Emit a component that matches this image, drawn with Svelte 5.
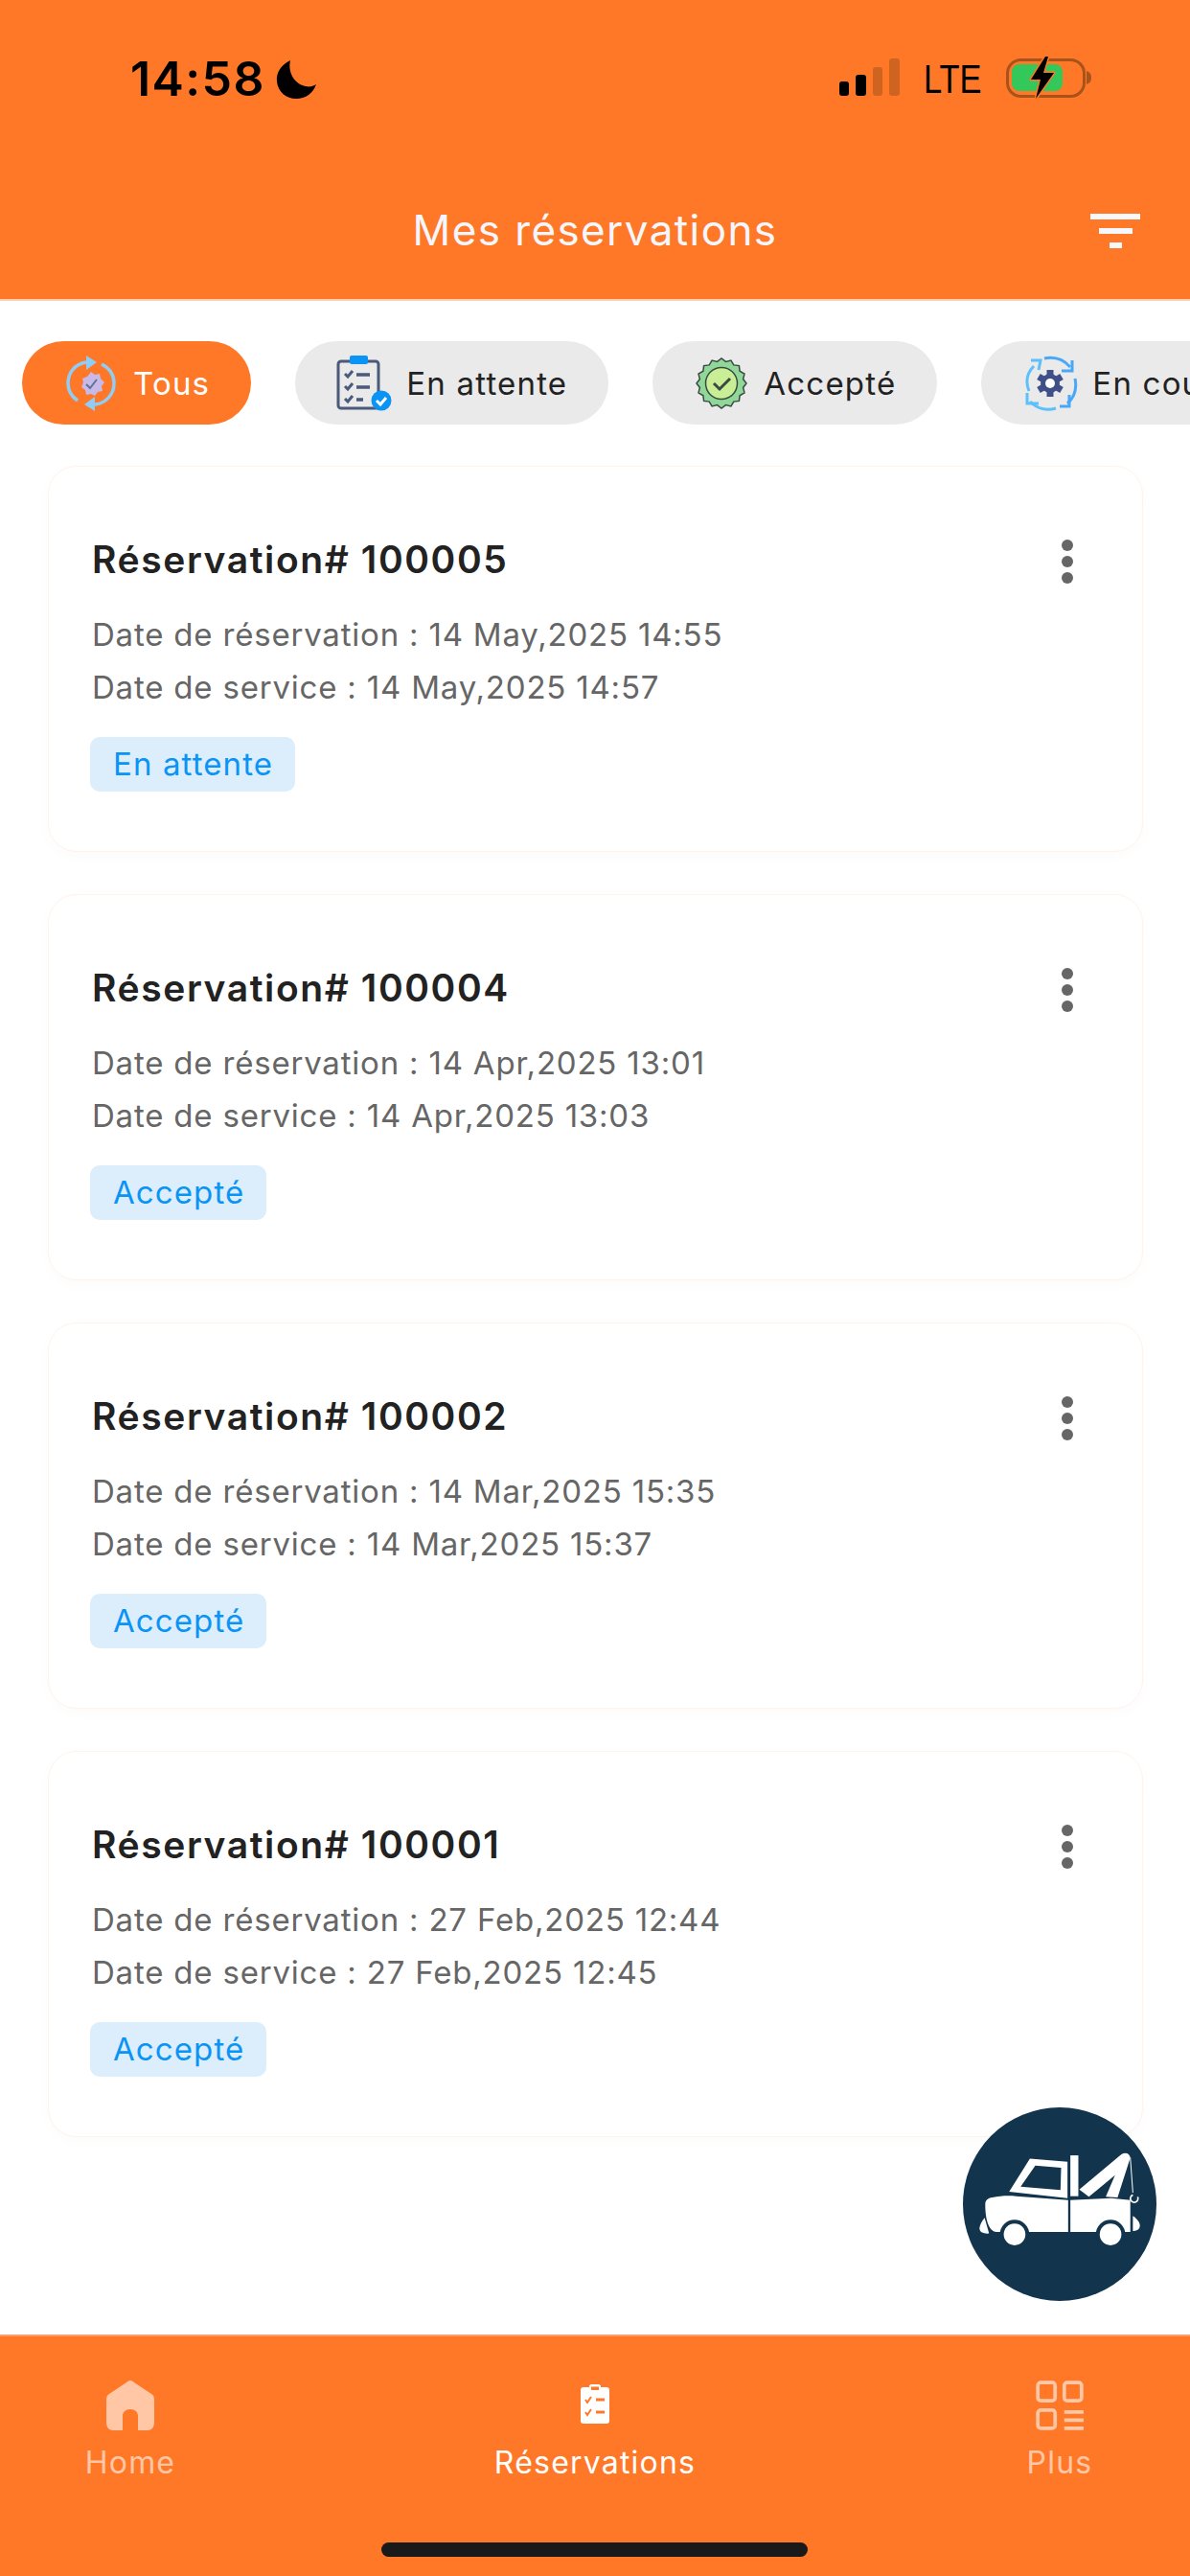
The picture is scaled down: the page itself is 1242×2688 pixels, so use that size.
<script>
  const chips = [
    { label: 'Tous', icon: 'all', active: true },
    { label: 'En attente', icon: 'pending' },
    { label: 'Accepté', icon: 'accepted' },
    { label: 'En cours', icon: 'progress' }
  ];

  const bookings = [
    { id: 100005, booked: '14 May,2025 14:55', service: '14 May,2025 14:57', status: 'En attente' },
    { id: 100004, booked: '14 Apr,2025 13:01', service: '14 Apr,2025 13:03', status: 'Accepté' },
    { id: 100002, booked: '14 Mar,2025 15:35', service: '14 Mar,2025 15:37', status: 'Accepté' },
    { id: 100001, booked: '27 Feb,2025 12:44', service: '27 Feb,2025 12:45', status: 'Accepté' }
  ];

  // scalloped edge for the "accepted" badge
  const scallop = Array.from({ length: 32 }, (_, i) => {
    const r = i % 2 ? 23 : 26;
    const a = (i / 32) * Math.PI * 2;
    return `${(29 + r * Math.cos(a)).toFixed(1)},${(29 + r * Math.sin(a)).toFixed(1)}`;
  }).join(' ');
</script>

<div class="screen">
  <header class="top">
    <div class="status">
      <span class="time">14:58</span>
      <svg class="moon" viewBox="0 0 42 40"><path d="M15 0C5 5 0 13 1 22c1 11 10 18 20 18 10 0 18-6 21-15-3 2-7 3-11 2C20 25 12 13 15 0z" fill="#000" /></svg>
      <span class="spacer"></span>
      <svg class="signal" viewBox="0 0 63 39">
        <rect x="0" y="24" width="10" height="15" rx="3" fill="#000" />
        <rect x="17" y="17" width="11" height="22" rx="3" fill="#000" />
        <rect x="35" y="9" width="10" height="30" rx="3" fill="#cf6420" />
        <rect x="52" y="0" width="11" height="39" rx="3" fill="#cf6420" />
      </svg>
      <span class="lte">LTE</span>
      <svg class="battery" viewBox="0 0 89 44">
        <rect x="1.5" y="3.5" width="80" height="38" rx="14" fill="none" stroke="#a9531c" stroke-width="3" />
        <rect x="6" y="8" width="53" height="28" rx="8" fill="#34c759" />
        <path d="M84 15c3 1 5 3 5 7s-2 6-5 7z" fill="#a9531c" />
        <path d="M41 0 26 24h10l-5 20 19-27H39l5-17z" fill="#000" stroke="#ff7828" stroke-width="3" paint-order="stroke" stroke-linejoin="round" />
      </svg>
    </div>
    <div class="titlebar">
      <h1>Mes réservations</h1>
      <div class="filter"><i></i><i></i><i></i></div>
    </div>
  </header>

  <div class="chips">
    {#each chips as chip}
      <div class="chip" class:active={chip.active}>
        <svg class="chip-icon" viewBox="0 0 58 58">
          {#if chip.icon === 'all'}
            <path d="M24 7C11 9 5 19 5 29c0 8 4 14 10 18" fill="none" stroke="#8fcdf6" stroke-width="3.5" />
            <path d="M24 0l11 7-11 8z" fill="#8fcdf6" />
            <path d="M40 9c8 4 13 11 13 20 0 12-9 21-20 22" fill="none" stroke="#8fcdf6" stroke-width="3.5" />
            <path d="M33 43l-11 8 11 7z" fill="#8fcdf6" />
            <path d="M29 17l4 3 5-1 1 5 4 4-3 4 1 5-5 1-3 4-4-2-5 1-1-5-4-3 2-5-1-4 5-2z" fill="#c7b9e8" />
            <path d="M24 30l4 4 7-9" fill="none" stroke="#5c7594" stroke-width="2" />
          {:else if chip.icon === 'pending'}
            <rect x="2" y="6" width="42" height="49" rx="3" fill="none" stroke="#4a5a7a" stroke-width="3" />
            <rect x="14" y="0" width="19" height="9" rx="2" fill="#0a94f5" />
            <path d="M9 19l3 3 5-6M9 32l3 3 5-6M9 45l3 3 5-6" fill="none" stroke="#4a5a7a" stroke-width="3" />
            <path d="M21 20h14M21 33h14M21 46h7" stroke="#4a5a7a" stroke-width="3.5" />
            <circle cx="47" cy="47" r="10.5" fill="#0a94f5" />
            <path d="M42 47l4 4 6-7" fill="none" stroke="#fff" stroke-width="3" />
          {:else if chip.icon === 'accepted'}
            <polygon points={scallop} fill="#8fd89a" stroke="#3b4a40" stroke-width="1.5" />
            <circle cx="29" cy="29" r="16.5" fill="#c9ee96" stroke="#3b4a40" stroke-width="1.5" />
            <path d="M21 29l6 6 11-11" fill="none" stroke="#3b4a40" stroke-width="3" />
          {:else}
            <path d="M7 37C3 27 5 18 12 11" fill="none" stroke="#5cc0fb" stroke-width="3" />
            <path d="M9 5h10l-2 10" fill="none" stroke="#5cc0fb" stroke-width="3" />
            <path d="M23 3c10-2 20 1 27 9" fill="none" stroke="#48a8f8" stroke-width="3" />
            <path d="M52 5v11H41" fill="none" stroke="#48a8f8" stroke-width="3" />
            <path d="M55 24c2 10 0 19-8 26" fill="none" stroke="#48a8f8" stroke-width="3" />
            <path d="M49 41v12H39" fill="none" stroke="#48a8f8" stroke-width="3" />
            <path d="M35 55c-10 3-20 0-27-7" fill="none" stroke="#5cc0fb" stroke-width="3" />
            <path d="M5 39v11h12" fill="none" stroke="#5cc0fb" stroke-width="3" />
            <path d="M29 29m-10 0a10 10 0 1 0 20 0a10 10 0 1 0-20 0" fill="#3f5088" />
            <path d="M29 15v28M17 22l24 14M17 36l24-14" stroke="#3f5088" stroke-width="7" />
            <circle cx="29" cy="29" r="5" fill="#fff" />
          {/if}
        </svg>
        <span>{chip.label}</span>
      </div>
    {/each}
  </div>

  <main class="list">
    {#each bookings as b}
      <article class="card">
        <div class="card-body">
          <h2>Réservation# {b.id}</h2>
          <p class="first">Date de réservation : {b.booked}</p>
          <p>Date de service : {b.service}</p>
          <span class="badge">{b.status}</span>
        </div>
        <div class="dots"><i></i><i></i><i></i></div>
      </article>
    {/each}
  </main>

  <nav class="tabs">
    <div class="tab">
      <svg class="tab-icon" viewBox="0 0 50 52"><path d="M25 0c2 0 3 1 4 2l18 12c2 1 3 3 3 6v24c0 5-3 8-7 8H33V37c0-4-3-7-8-7s-8 3-8 7v15H7c-4 0-7-3-7-8V20c0-3 1-5 3-6L21 2c1-1 2-2 4-2z" fill="#ffc7a6" /></svg>
      <span>Home</span>
    </div>
    <div class="tab current">
      <svg class="tab-icon clip" viewBox="0 0 30 41">
        <path d="M3 3h6V2c0-1 1-2 2-2h8c1 0 2 1 2 2v1h6c2 0 3 1 3 3v32c0 2-1 3-3 3H3c-2 0-3-1-3-3V6c0-2 1-3 3-3z" fill="#fff" />
        <rect x="11" y="2.5" width="8" height="3.5" fill="#ff7828" />
        <path d="M5 16l2 3 4-6M5 29l2 3 4-6" fill="none" stroke="#ff7828" stroke-width="2" />
        <path d="M16 16h9M16 29h9" stroke="#ff7828" stroke-width="3" />
      </svg>
      <span>Réservations</span>
    </div>
    <div class="tab">
      <svg class="tab-icon" viewBox="0 0 47 49" fill="none" stroke="#ffc7a6" stroke-width="3.5">
        <rect x="2" y="2" width="17" height="18" rx="3" />
        <rect x="28" y="2" width="17" height="18" rx="3" />
        <rect x="2" y="29" width="17" height="18" rx="3" />
        <path d="M28 31h19M28 39h19M28 47h19" />
      </svg>
      <span>Plus</span>
    </div>
    <div class="home-bar"></div>
  </nav>

  <div class="fab">
    <svg viewBox="135 88 607 606">
      <path d="M345 248l118 10v114l-183-20zM362 270l-46 66 125 11 2-70z" fill="#fff" fill-rule="evenodd" />
      <rect x="472" y="238" width="25" height="128" fill="#fff" />
      <path d="M500 345 632 235c12-8 26-4 28 10l-40 125-37-2 29-68-82 68z" fill="#fff" />
      <path d="M660 245l8 110" stroke="#fff" stroke-width="3" />
      <path d="M668 362a12 12 0 1 0 15 6" fill="none" stroke="#fff" stroke-width="5" />
      <path d="M205 392c0-14 8-20 22-22 24-5 50-6 75-4l163 12v100H240c-20 0-35-30-35-86z" fill="#fff" />
      <path d="M472 378l128-6 60 6v100H472z" fill="#fff" />
      <circle cx="297" cy="486" r="46" fill="#12344d" />
      <circle cx="598" cy="486" r="46" fill="#12344d" />
      <circle cx="297" cy="486" r="34" fill="#fff" />
      <circle cx="598" cy="486" r="34" fill="#fff" />
      <path d="M203 434c-8 10-15 22-16 32 0 12 10 18 30 17z" fill="#fff" />
      <path d="M668 428c12 8 22 20 22 30 0 12-10 18-22 17z" fill="#fff" />
    </svg>
  </div>
</div>

<style>
  :global(body) {
    margin: 0;
    background: #fff;
  }

  .screen {
    position: relative;
    width: 1242px;
    height: 2688px;
    display: flex;
    flex-direction: column;
    overflow: hidden;
    background: #fff;
    font-family: Inter, 'Noto Sans', sans-serif;
  }

  .top {
    height: 312px;
    flex: none;
    background: #ff7828;
    border-bottom: 2px solid #ffd0b4;
    box-sizing: content-box;
  }

  .status {
    display: flex;
    align-items: flex-start;
    height: 109px;
    padding: 58px 103px 0 136px;
    box-sizing: border-box;
    margin-bottom: 96px;
  }
  .time {
    font-size: 50px;
    font-weight: 600;
    line-height: 48px;
    letter-spacing: 1.4px;
    color: #000;
  }
  .moon {
    width: 42px;
    height: 40px;
    margin: 5px 0 0 11px;
  }
  .spacer {
    flex: 1;
  }
  .signal {
    width: 63px;
    height: 39px;
    margin-top: 3px;
  }
  .lte {
    margin: 4px 0 0 25px;
    font-family: 'Liberation Sans', sans-serif;
    font-size: 43px;
    line-height: 40px;
    color: #000;
    transform: scaleX(0.8);
    transform-origin: left;
    width: 59px;
  }
  .battery {
    width: 89px;
    height: 44px;
    margin-left: 27px;
    margin-top: 1px;
  }

  .titlebar {
    position: relative;
    display: flex;
    justify-content: center;
    align-items: center;
    height: 70px;
  }
  h1 {
    margin: 0;
    font-size: 44px;
    font-weight: 400;
    letter-spacing: 1.4px;
    color: #f3f6fb;
  }
  .filter {
    position: absolute;
    right: 52px;
    top: 18px;
    display: flex;
    flex-direction: column;
    align-items: center;
    gap: 9px;
    width: 52px;
  }
  .filter i {
    display: block;
    height: 6px;
    width: 52px;
    background: #f7f8fb;
  }
  .filter i:nth-child(2) {
    width: 35px;
  }
  .filter i:nth-child(3) {
    width: 13px;
  }

  .chips {
    flex: none;
    display: flex;
    gap: 46px;
    padding: 42px 0 0 23px;
    white-space: nowrap;
  }
  .chip {
    flex: none;
    display: flex;
    align-items: center;
    gap: 15px;
    height: 87px;
    padding: 0 43px;
    border-radius: 44px;
    background: #eaeaea;
    color: #222;
    font-size: 33px;
    letter-spacing: 1.2px;
  }
  .chip.active {
    background: #ff7828;
    color: #fff;
  }
  .chip-icon {
    width: 58px;
    height: 58px;
    flex: none;
  }

  .list {
    flex: 1;
    display: flex;
    flex-direction: column;
    gap: 44px;
    padding: 43px 49px 0 50px;
  }
  .card {
    height: 403px;
    box-sizing: border-box;
    display: flex;
    justify-content: space-between;
    align-items: flex-start;
    padding: 0 45px;
    background: #fff;
    border: 1.5px solid #fff3ec;
    border-radius: 30px;
    box-shadow: 0 4px 16px rgba(0, 0, 0, 0.02);
  }
  .card-body {
    padding-top: 70px;
  }
  h2 {
    margin: 0;
    font-size: 39px;
    line-height: 54px;
    font-weight: 600;
    letter-spacing: 1.6px;
    color: #222;
  }
  p {
    margin: 0;
    font-size: 33px;
    line-height: 55px;
    letter-spacing: 0.8px;
    color: #666;
  }
  p.first {
    margin-top: 24px;
  }
  .badge {
    display: inline-block;
    margin: 24px 0 0 -2px;
    padding: 0 23px 0 24px;
    height: 57px;
    line-height: 57px;
    border-radius: 10px;
    background: #dceefb;
    color: #0a94f5;
    font-size: 33px;
    letter-spacing: 1.1px;
  }
  .dots {
    display: flex;
    flex-direction: column;
    gap: 5px;
    margin-top: 76px;
    margin-right: 27px;
  }
  .dots i {
    display: block;
    width: 12px;
    height: 12px;
    border-radius: 50%;
    background: #666;
  }

  .tabs {
    position: relative;
    flex: none;
    height: 252px;
    box-sizing: border-box;
    display: grid;
    grid-template-columns: 272px 1fr 272px;
    padding-top: 46px;
    background: #ff7828;
    border-top: 2px solid #ff9f67;
  }
  .tab {
    display: flex;
    flex-direction: column;
    align-items: center;
    color: #ffc7a6;
    font-size: 32px;
    letter-spacing: 1.2px;
  }
  .tab.current {
    color: #fff;
  }
  .tab-icon {
    height: 52px;
    width: 50px;
    margin-bottom: 14px;
  }
  .tab-icon.clip {
    width: 30px;
    height: 41px;
    margin: 4px 0 21px;
  }
  .home-bar {
    position: absolute;
    left: 398px;
    bottom: 20px;
    width: 445px;
    height: 15px;
    border-radius: 8px;
    background: #1a1a1a;
  }

  .fab {
    position: absolute;
    left: 1005px;
    top: 2199px;
    width: 202px;
    height: 202px;
    border-radius: 50%;
    background: #12344d;
  }
  .fab svg {
    display: block;
    width: 100%;
    height: 100%;
  }
</style>
